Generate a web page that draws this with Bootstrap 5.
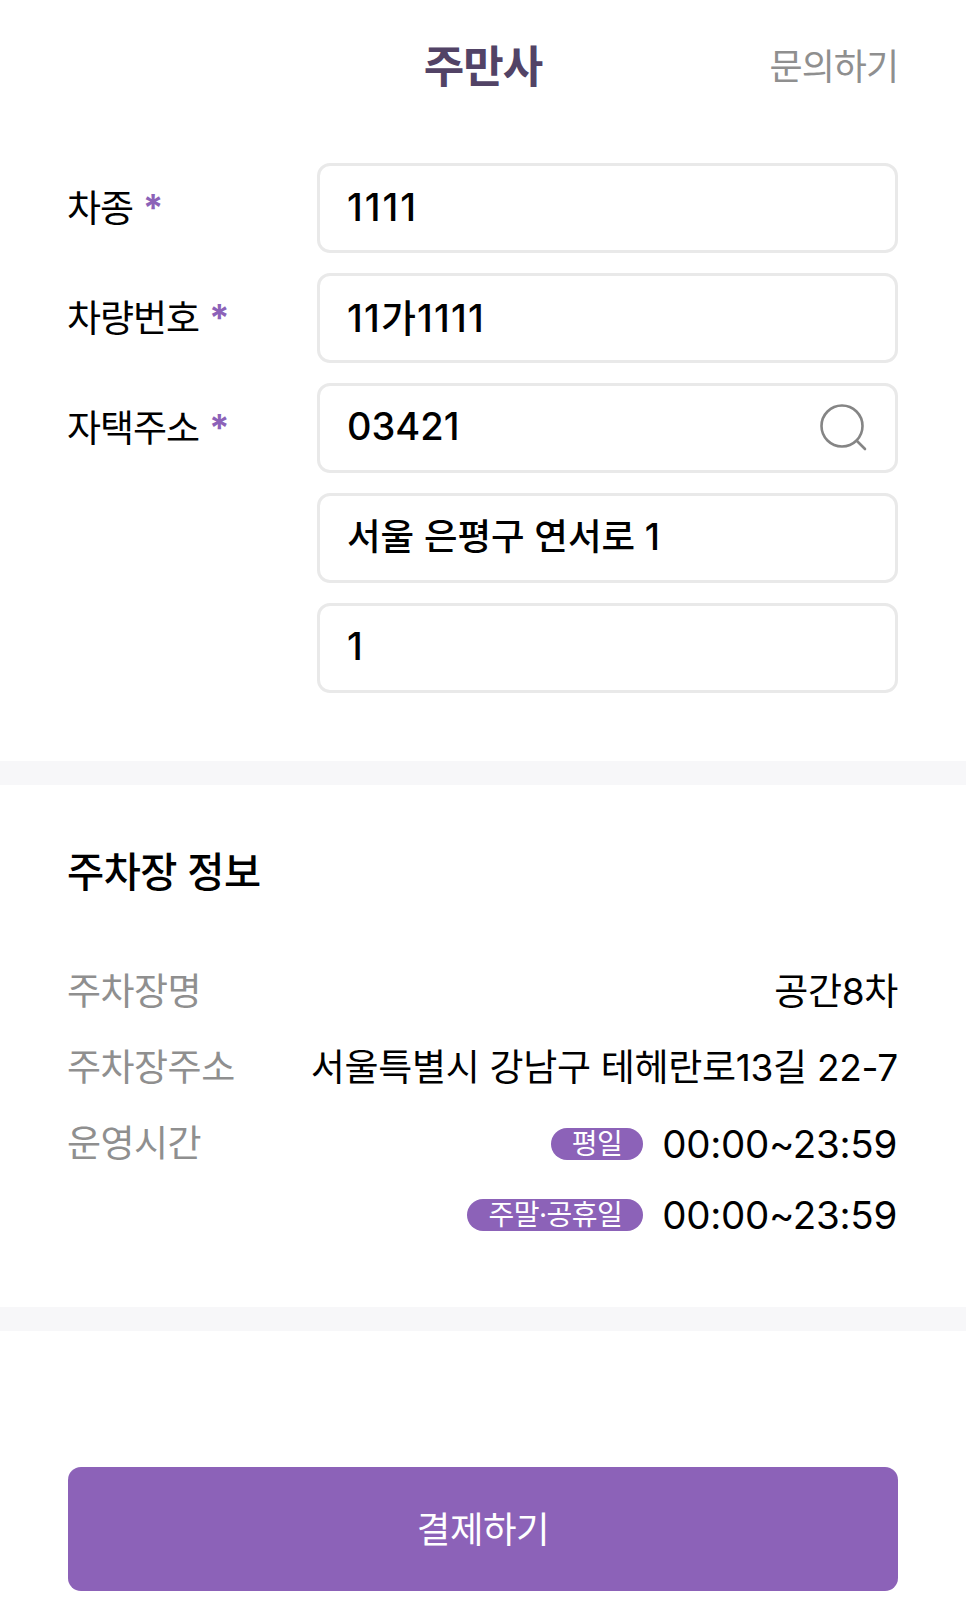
<!DOCTYPE html>
<html lang="ko">
<head>
<meta charset="utf-8">
<link href="https://cdn.jsdelivr.net/npm/bootstrap@5.3.0/dist/css/bootstrap.min.css" rel="stylesheet">
<style>
body{font-family:Inter,"Noto Sans CJK KR",sans-serif;background:#fff;color:#000;width:966px;height:1618px;overflow:hidden}
.top-bar{height:132px;padding:2px 68px 0}
.top-title{font-size:44px;font-weight:700;color:#524366;letter-spacing:-1px;left:0;right:0;top:2px;bottom:0}
.top-link{font-size:36px;color:#8f8f8f;letter-spacing:-1px}
.form-area{padding:31px 68px 68px;display:flex;flex-direction:column;gap:20px}
.field-label{width:249px;flex:none;font-size:37px;letter-spacing:-1px;line-height:44px;padding-top:24px;margin-left:-1px;margin-right:1px}
.req{color:#8c62b8;margin-left:2px;font-weight:700;position:relative;top:-1px}
.field-box{height:90px;border:3px solid #e9e9e9;border-radius:13px;padding:0 27px 4px;font-size:38px;font-weight:500;color:#000;box-shadow:none}
.field-box:focus{border-color:#e9e9e9;box-shadow:none}
.field-spaced{letter-spacing:2px;padding-bottom:2px}
.field-hangul{font-size:36.5px;padding-bottom:7px}
.field-mixed{letter-spacing:1.2px;padding-bottom:6px}
.search-glyph{right:30px;top:21px;width:48px;height:48px}
.sep-band{height:24px;background:#f7f7f9}
.info-area{padding:65px 68px 0;height:522px}
.info-head{font-size:40.4px;font-weight:500;letter-spacing:-.5px;line-height:46px;margin-bottom:72px;margin-left:-1px}
.info-line{font-size:37px;height:48px;margin-bottom:28px;line-height:48px;font-weight:400}
.info-line.tight{margin-bottom:23px}
.info-key{color:#8f8f8f;letter-spacing:-.5px;white-space:nowrap;margin-left:-1px}
.info-val{letter-spacing:-.3px;white-space:nowrap}
.time-text{font-size:38.5px;margin-right:1px}
.day-pill{background:#8c62b8;color:#fff;font-size:28px;line-height:32px;height:32px;border-radius:16px;padding:0 21px;margin-right:19px;letter-spacing:-.5px}
.pay-wrap{padding:136px 68px 0}
.pay-btn{height:124px;background:#8c62b8;border:0;border-radius:13px;color:#fff;font-size:36.5px;letter-spacing:-.5px;padding-top:8px}
.pay-btn:hover{background:#8c62b8;color:#fff}
</style>
</head>
<body>
<div class="top-bar d-flex align-items-center justify-content-end position-relative">
  <div class="top-title position-absolute d-flex align-items-center justify-content-center">주만사</div>
  <a class="top-link text-decoration-none position-relative" href="#">문의하기</a>
</div>
<div class="form-area">
  <div class="d-flex"><div class="field-label">차종<span class="req"> *</span></div><input class="form-control field-box field-spaced flex-grow-1" value="1111"></div>
  <div class="d-flex"><div class="field-label">차량번호<span class="req"> *</span></div><input class="form-control field-box field-mixed flex-grow-1" value="11가1111"></div>
  <div class="d-flex"><div class="field-label">자택주소<span class="req"> *</span></div>
    <div class="flex-grow-1 position-relative"><input class="form-control field-box" value="03421">
      <svg class="search-glyph position-absolute" viewBox="0 0 48 48" fill="none" stroke="#858585" stroke-width="2.6" stroke-linecap="round"><circle cx="22" cy="22" r="20.5"/><path d="M37 37l8 8"/></svg>
    </div></div>
  <div class="d-flex"><div class="field-label"></div><input class="form-control field-box field-hangul flex-grow-1" value="서울 은평구 연서로 1"></div>
  <div class="d-flex"><div class="field-label"></div><input class="form-control field-box flex-grow-1" value="1"></div>
</div>
<div class="sep-band"></div>
<div class="info-area">
  <div class="info-head">주차장 정보</div>
  <div class="info-line d-flex justify-content-between"><span class="info-key">주차장명</span><span class="info-val">공간8차</span></div>
  <div class="info-line d-flex justify-content-between"><span class="info-key">주차장주소</span><span class="info-val">서울특별시 강남구 테헤란로13길 22-7</span></div>
  <div class="info-line tight d-flex justify-content-between"><span class="info-key">운영시간</span><span class="info-val d-flex align-items-center"><span class="day-pill">평일</span><span class="time-text">00:00~23:59</span></span></div>
  <div class="info-line d-flex justify-content-end"><span class="info-val d-flex align-items-center"><span class="day-pill">주말·공휴일</span><span class="time-text">00:00~23:59</span></span></div>
</div>
<div class="sep-band"></div>
<div class="pay-wrap"><button class="btn pay-btn w-100">결제하기</button></div>
<script src="https://cdn.jsdelivr.net/npm/bootstrap@5.3.0/dist/js/bootstrap.bundle.min.js"></script>
</body>
</html>
